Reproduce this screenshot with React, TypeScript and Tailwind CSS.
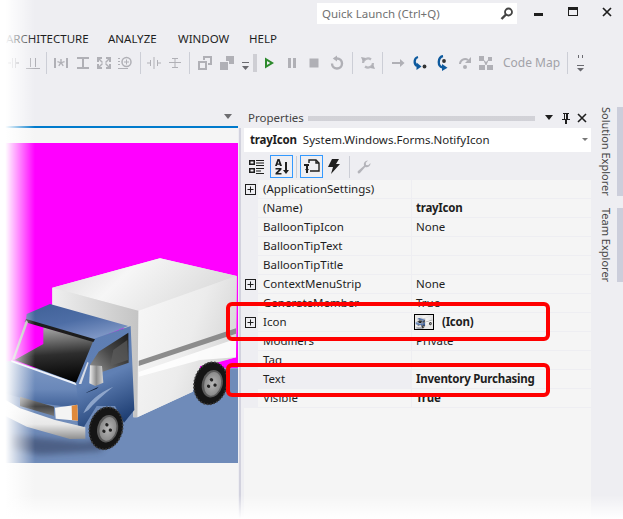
// Visual Studio properties panel for a tray icon, with the red call-outs on Icon and Text.
import type { ReactNode } from "react";

const FONT = "font-['Noto_Sans',sans-serif]";

type Row = { name: string; value?: string; bold?: boolean; plus?: boolean; icon?: boolean; selected?: boolean };

const ROWS: Row[] = [
  { name: "(ApplicationSettings)", plus: true },
  { name: "(Name)", value: "trayIcon", bold: true },
  { name: "BalloonTipIcon", value: "None" },
  { name: "BalloonTipText" },
  { name: "BalloonTipTitle" },
  { name: "ContextMenuStrip", value: "None", plus: true },
  { name: "GenerateMember", value: "True" },
  { name: "Icon", value: "(Icon)", bold: true, plus: true, icon: true },
  { name: "Modifiers", value: "Private" },
  { name: "Tag" },
  { name: "Text", value: "Inventory Purchasing", bold: true, selected: true },
  { name: "Visible", value: "True", bold: true },
];

function Ico({ children, c = "#b0b0b6" }: { children: ReactNode; c?: string }) {
  return (
    <svg width="16" height="16" viewBox="0 0 16 16" fill={c} stroke="none">
      {children}
    </svg>
  );
}

function Sep() {
  return <div className="h-[22px] w-px bg-[#ccced6]" />;
}

// slot keeps each toolbar glyph on its own column
function Slot({ w, children }: { w: string; children?: ReactNode }) {
  return <div className={`flex shrink-0 items-center justify-center ${w}`}>{children}</div>;
}

function MainToolbar() {
  return (
    <div className="mt-px flex h-[22px] items-center pl-[3px]">
      <Slot w="w-[20px]">
        <Ico><path d="M7 3h1v10H7zM10 3h1v10h-1zM3 7h3v2H3zM11 7h3v2h-3z" /></Ico>
      </Slot>
      <Slot w="w-[20px]">
        <Ico><path d="M5 3h1v9H5zM10 3h1v9h-1zM1 13h14v1H1z" /></Ico>
      </Slot>
      <Slot w="w-[7px]"><Sep /></Slot>
      <Slot w="w-[22px]">
        <Ico><path d="M1 3h2v10H1zM13 3h2v10h-2zM7.300 4h1.400v3l2.600-1 .5 1.300-2.700.8 1.700 2.300-1.100.8L8 8.800l-1.700 2.400-1.100-.8 1.700-2.300-2.700-.8.5-1.300 2.600 1z" /></Ico>
      </Slot>
      <Slot w="w-[21px]">
        <Ico><path d="M2 2h12v2H9v8h5v2H2v-2h5V4H2z" /></Ico>
      </Slot>
      <Slot w="w-[21px]">
        <Ico><path d="M1 2h5v2H4l3 3-1 1-3-3v2H1zM15 2v5h-2V5l-3 3-1-1 3-3h-2V2zM1 14V9h2v2l3-3 1 1-3 3h2v2zM15 14h-5v-2h2L9 9l1-1 3 3V9h2z" /></Ico>
      </Slot>
      <Slot w="w-[22px]">
        <Ico>
          <path d="M1 13h10v1H1zM1 3h2v1H1zM1 6h2v1H1zM1 9h2v1H1z" />
          <circle cx="9.500" cy="7" r="4.500" fill="none" stroke="#b0b0b6" strokeWidth="1.500" />
          <path d="M9 4.500h1V6.500h2v1h-2v2H9v-2H7v-1h2z" />
        </Ico>
      </Slot>
      <Slot w="w-[8px]"><Sep /></Slot>
      <Slot w="w-[20px]">
        <Ico><path d="M7.500 2h1v12h-1zM4 5h1v6H4zM11 5h1v6h-1zM1 7.500h3v1H1zM12 7.500h3v1h-3z" /></Ico>
      </Slot>
      <Slot w="w-[21px]">
        <Ico><path d="M2 7h12v1H2zM5 3h6v1H5zM5 12h6v1H5zM7.500 4h1v3h-1zM7.500 8h1v4h-1z" /></Ico>
      </Slot>
      <Slot w="w-[9px]"><Sep /></Slot>
      <Slot w="w-[22px]">
        <Ico><path d="M6 1h9v9h-4V8h2V3H8v2H6zM1 6h9v9H1zm2 2v5h5V8z" /></Ico>
      </Slot>
      <Slot w="w-[22px]">
        <Ico><path d="M7 1h8v8H10V6H7zM1 7h8v8H1z" /></Ico>
      </Slot>
      <Slot w="w-[14px]">
        <svg width="7" height="10" viewBox="0 0 7 10" className="mt-[8px]">
          <path d="M0 0h7v1H0z" fill="#6a6a70" />
          <path d="M0 4h7L3.500 8z" fill="#6a6a70" />
        </svg>
      </Slot>
      <Slot w="w-[6px]">
        <div className="h-[18px] w-[4px] bg-[radial-gradient(#a8a8b0_0.6px,transparent_0.8px)] bg-[length:2px_2px]" />
      </Slot>
      <Slot w="w-[22px]">
        <Ico c="#2d8a2d"><path d="M4 2.500 13 8l-9 5.500zM6 6v4l3.300-2z" fillRule="evenodd" /></Ico>
      </Slot>
      <Slot w="w-[23px]">
        <Ico><path d="M4 3h3v10H4zM9 3h3v10H9z" /></Ico>
      </Slot>
      <Slot w="w-[22px]">
        <Ico><path d="M3.500 3.500h9v9h-9z" /></Ico>
      </Slot>
      <Slot w="w-[23px]">
        <Ico>
          <path d="M8 3.500a5 5 0 1 1-5 5" fill="none" stroke="#b0b0b6" strokeWidth="2.400" />
          <path d="M8 0.500v6L3.800 3.500z" />
        </Ico>
      </Slot>
      <Slot w="w-[8px]"><Sep /></Slot>
      <Slot w="w-[23px]">
        <Ico>
          <path d="M3 8a5 5 0 0 1 8-3.500M13 8a5 5 0 0 1-8 3.500" fill="none" stroke="#b8b8be" strokeWidth="2.200" />
          <path d="M1 2l5 1-3 4zM15 14l-5-1 3-4z" />
        </Ico>
      </Slot>
      <Slot w="w-[7px]"><Sep /></Slot>
      <Slot w="w-[23px]">
        <Ico><path d="M2 7h8V4l4.500 4-4.500 4V9H2z" /></Ico>
      </Slot>
      <Slot w="w-[22px]">
        <Ico c="#0e5a9e">
          <path d="M6 2C2 3 1.500 9 5 11" fill="none" stroke="#0e5a9e" strokeWidth="2.300" />
          <path d="M4.500 7.500 9.500 11.500 4.500 15z" />
          <circle cx="12.500" cy="11.500" r="1.900" fill="#333" />
        </Ico>
      </Slot>
      <Slot w="w-[23px]">
        <Ico c="#0e5a9e">
          <path d="M8 1C3 2 2 11 7.500 12.500" fill="none" stroke="#0e5a9e" strokeWidth="2.300" />
          <path d="M7 9 12.500 12.800 7 16z" />
          <circle cx="9" cy="6" r="1.900" fill="#333" />
        </Ico>
      </Slot>
      <Slot w="w-[21px]">
        <Ico>
          <path d="M3 9a5 5 0 0 1 8-4" fill="none" stroke="#b0b0b6" strokeWidth="2" />
          <path d="M14 2v6H8z" />
          <circle cx="8" cy="12" r="2" />
        </Ico>
      </Slot>
      <Slot w="w-[21px]">
        <Ico><path d="M1 1h5v5H1zM10 2h4v4h-4zM1 10h6v5H1zM9 10h6v5H9zM6 5l2 2 2-2v1.500L8.500 10h-1L6 6.500z" /></Ico>
      </Slot>
      <span className="ml-[7px] w-[64px] text-[12px] leading-none text-[#a2a2a8]">Code Map</span>
      <Sep />
      <Slot w="w-[24px]">
        <svg width="7" height="18" viewBox="0 0 7 18">
          <path d="M1 1h1v3H1zM5 1h1v3H5zM0 11h7v1H0zM0 14h7l-3.500 3.500z" fill="#6a6a70" />
        </svg>
      </Slot>
    </div>
  );
}

function TruckShapes({ window = "#ff00ff" }: { window?: string }) {
  return (
    <g>
      {/* shadow on the floor */}
      <path d="M30 585 250 605 340 590 300 634 120 645 30 625z" fill="#2b3552" opacity=".5" filter="url(#soft)" />

      {/* cargo box */}
      <path d="M157 143 480 55 710 108 708 352 600 378 578 455 412 532 400 532 390 270 157 205z" fill="#e6e6e6" />
      <path d="M157 143 480 55 710 108 415 212z" fill="url(#boxTop)" />
      <path d="M415 212 710 108 708 352 650 368 600 378 578 455 412 532z" fill="url(#boxSide)" />
      <path d="M157 143 415 212 412 532 400 532 390 270 157 205z" fill="url(#boxFront)" />
      <path d="M416 362 708 265 708 281 416 378z" fill="#8c8c8c" />
      <path d="M416 396 708 296 708 352 600 360 416 410z" fill="#ffffff" opacity=".85" />

      {/* cab */}
      <path d="M80 222 150 192 385 258 282 300 78 240z" fill="url(#roof)" />
      <path d="M278 298 392 258 403 510 372 548 345 498 290 498 252 560 236 590 226 432z" fill="url(#door)" />
      <path d="M296 335 385 278 386 368 282 404 268 378z" fill="url(#glassSide)" />
      <path d="M340 330 382 300 384 360 330 378z" fill="#5c5c5c" opacity=".7" />
      <path d="M250 520Q270 470 340 440Q290 480 265 510z" fill="#9fb4d6" opacity=".8" />
      <path d="M258 458 296 440 290 446 260 458z" fill="#0c1b33" />

      {/* windscreen, open at the top left where the backdrop shows through */}
      <path d="M78 240 134 258 134 316 40 362z" fill={window} />
      <path d="M130 262 280 302 228 428 44 360 130 312z" fill="url(#glass)" />
      <path d="M78 237 285 298 280 306 74 246z" fill="#1d1d1d" />
      <path d="M78 240 36 360 44 358 84 246z" fill="#b8b8b8" />

      {/* hood and front */}
      <path d="M40 362 228 430 236 505 120 490 0 456 0 366z" fill="url(#hood)" />
      <path d="M34 360 226 428 230 436 34 366z" fill="#eef2fa" />
      <path d="M60 470 162 500 162 528 60 498z" fill="url(#grille)" />
      <path d="M165 503 232 494 234 542 167 536z" fill="#f4f4f4" />
      <path d="M215 497 232 494 234 542 216 540z" fill="#e08a3c" />
      <path d="M0 470 60 505 165 540 256 562 256 596 210 597 80 560 0 520z" fill="url(#bumper)" />

      {/* mirror */}
      <path d="M236 432 262 366 266 368 244 432z" fill="#d9dde6" />
      <path d="M270 376 306 378 310 428 286 438 268 430z" fill="url(#mirror)" />

      <Wheel cx={318} cy={565} />
      <Wheel cx={632} cy={430} />
    </g>
  );
}

function Wheel({ cx, cy }: { cx: number; cy: number }) {
  return (
    <g transform={`translate(${cx} ${cy}) rotate(14)`}>
      <ellipse rx="50" ry="65" fill="#151515" />
      <ellipse rx="49" ry="64" fill="none" stroke="#3c3c3c" strokeWidth="5" strokeDasharray="5 5" />
      <ellipse cx="5" rx="31" ry="42" fill="#5a5a5a" />
      <ellipse cx="6" rx="25" ry="36" fill="url(#hub)" />
      <circle cx="0" cy="-11" r="5" fill="#222" />
      <circle cx="-4" cy="10" r="5" fill="#222" />
      <circle cx="14" cy="2" r="5" fill="#222" />
    </g>
  );
}

// gradients shared by the big picture and the thumbnail
function TruckDefs() {
  return (
    <defs>
      <linearGradient id="boxTop" x1="0" y1="0" x2="1" y2="0.3">
        <stop offset="0" stopColor="#dadada" />
        <stop offset=".45" stopColor="#f6f6f6" />
        <stop offset="1" stopColor="#dcdcdc" />
      </linearGradient>
      <linearGradient id="boxSide" x1="0" y1="0" x2="1" y2="0.5">
        <stop offset="0" stopColor="#f8f8f8" />
        <stop offset=".6" stopColor="#ececec" />
        <stop offset="1" stopColor="#d6d6d6" />
      </linearGradient>
      <linearGradient id="boxFront" x1="0" y1="0" x2="1" y2="0">
        <stop offset="0" stopColor="#efefef" />
        <stop offset="1" stopColor="#c4c4c4" />
      </linearGradient>
      <linearGradient id="roof" x1="0" y1="0" x2="0.6" y2="1">
        <stop offset="0" stopColor="#3f6097" />
        <stop offset=".55" stopColor="#4e6ea6" />
        <stop offset="1" stopColor="#8098c6" />
      </linearGradient>
      <linearGradient id="door" x1="0" y1="0" x2="0.25" y2="1">
        <stop offset="0" stopColor="#5d7db3" />
        <stop offset=".55" stopColor="#6080b4" />
        <stop offset="1" stopColor="#1d3d72" />
      </linearGradient>
      <linearGradient id="glassSide" x1="0" y1="1" x2="1" y2="0">
        <stop offset="0" stopColor="#9a9a9a" />
        <stop offset=".5" stopColor="#4a4a4a" />
        <stop offset="1" stopColor="#1a1a1a" />
      </linearGradient>
      <linearGradient id="glass" x1="0.4" y1="0" x2="0.5" y2="1">
        <stop offset="0" stopColor="#a8a8a8" />
        <stop offset=".25" stopColor="#6c6c6c" />
        <stop offset=".5" stopColor="#2e2e2e" />
        <stop offset="1" stopColor="#000000" />
      </linearGradient>
      <linearGradient id="hood" x1="0" y1="0" x2="0" y2="1">
        <stop offset="0" stopColor="#7f9ac6" />
        <stop offset=".6" stopColor="#6a88b9" />
        <stop offset="1" stopColor="#3e5f96" />
      </linearGradient>
      <linearGradient id="grille" x1="0" y1="0" x2="0" y2="1">
        <stop offset="0" stopColor="#888888" />
        <stop offset=".5" stopColor="#444444" />
        <stop offset="1" stopColor="#777777" />
      </linearGradient>
      <linearGradient id="bumper" x1="0" y1="0" x2="0" y2="1">
        <stop offset="0" stopColor="#ffffff" />
        <stop offset=".65" stopColor="#e8e8e8" />
        <stop offset="1" stopColor="#8f8f8f" />
      </linearGradient>
      <linearGradient id="mirror" x1="0" y1="0" x2="1" y2="0">
        <stop offset="0" stopColor="#f2f2f2" />
        <stop offset=".5" stopColor="#8d8d8d" />
        <stop offset="1" stopColor="#d4d4d4" />
      </linearGradient>
      <radialGradient id="hub">
        <stop offset="0" stopColor="#b8b8b8" />
        <stop offset="1" stopColor="#8a8a8a" />
      </radialGradient>
      <filter id="soft" x="-20%" y="-40%" width="140%" height="180%">
        <feGaussianBlur stdDeviation="10" />
      </filter>
    </defs>
  );
}

function DesignerImage() {
  return (
    <svg width="238" height="320" viewBox="0 -291 714 960" className="block shrink-0">
      <TruckDefs />
      <rect x="0" y="-291" width="714" height="676" fill="#ff00ff" />
      <rect x="0" y="385" width="714" height="284" fill="#6f8bb9" />
      <TruckShapes />
    </svg>
  );
}

function PlusBox() {
  return (
    <svg width="11" height="11" viewBox="0 0 11 11">
      <rect x=".5" y=".5" width="10" height="10" fill="none" stroke="#1e1e1e" />
      <path d="M5 2.500h1v2.500h2.500v1H6v2.500H5V6H2.500V5H5z" fill="#1e1e1e" />
    </svg>
  );
}

function IconThumb() {
  return (
    <span className="mr-[8px] ml-[-2px] flex h-[16px] w-[20px] shrink-0 border border-black bg-[#e8e8e8]">
      <svg width="18" height="14" viewBox="0 60 714 600">
        <TruckShapes window="#e8e8e8" />
      </svg>
    </span>
  );
}

function PropRow({ row }: { row: Row }) {
  return (
    <div className="flex h-[19px] text-[11.5px] leading-[18px] text-[#1e1e1e]">
      <div className="flex w-[14px] shrink-0 items-center pb-px pl-[1px]">{row.plus && <PlusBox />}</div>
      <div
        className={`w-[153px] shrink-0 border-b border-[#eeeef2] pl-[5px] whitespace-nowrap ${
          row.selected ? "bg-[#eeeef2]" : "bg-[#f5f5f5]"
        }`}
      >
        {row.name}
      </div>
      <div className="w-px bg-[#eeeef2]" />
      <div
        className={`flex flex-1 items-center border-b border-[#eeeef2] bg-[#f5f5f5] pl-[4px] whitespace-nowrap ${
          row.bold ? "font-bold tracking-[-0.25px]" : ""
        }`}
      >
        {row.icon && <IconThumb />}
        {row.value}
      </div>
    </div>
  );
}

function PropertiesPanel() {
  return (
    <div className="flex w-[347px] shrink-0 flex-col">
      <div className="flex h-[20px] items-center pl-[4px] text-[11.5px] text-[#444444]">
        <span className="w-[60px]">Properties</span>
        <div className="h-[5px] w-[227px] bg-[radial-gradient(#b0b0b8_0.6px,transparent_0.8px)] bg-[length:2px_2px]" />
        <svg width="10" height="6" viewBox="0 0 10 6" className="ml-[9px]">
          <path d="M1 0h8L5 5z" fill="#1e1e1e" />
        </svg>
        <svg width="10" height="13" viewBox="0 0 10 13" className="ml-[7px]">
          <path d="M2 1h6v1H7v5h2v1H6v4H4V8H1V7h2V2H2zM4 2v5h1V2z" fill="#1e1e1e" fillRule="evenodd" />
        </svg>
        <svg width="10" height="10" viewBox="0 0 10 10" className="ml-[6px]">
          <path d="M1 1l8 8M9 1 1 9" stroke="#1e1e1e" strokeWidth="1.600" />
        </svg>
      </div>

      <div className="flex h-[24px] items-center bg-white pl-[6px] text-[11.5px] text-[#1e1e1e]">
        <span className="font-bold tracking-[-0.2px]">trayIcon</span>
        <span className="ml-[6px] flex-1">System.Windows.Forms.NotifyIcon</span>
        <svg width="6" height="4" viewBox="0 0 6 4" className="mr-[3px]">
          <path d="M0 0h6L3 3z" fill="#777777" />
        </svg>
      </div>

      <div className="flex h-[28px] items-center pt-px">
        <div className="flex w-[26px] justify-center">
          <svg width="16" height="16" viewBox="0 0 16 16" fill="#1e1e1e">
            <path d="M0 1h6v5H0zm1.500 1.500v2h3v-2zM0 9h6v5H0zm1.500 1.500v2h3v-2z" fillRule="evenodd" />
            <path d="M7 1h8v1H7zM7 3.500h8v1H7zM7 6h8v1H7zM7 9h8v1H7zM7 11.500h5v1H7zM7 14h8v1H7z" />
          </svg>
        </div>
        <div className="flex h-[23px] w-[23px] items-center justify-center border border-[#3399ff]">
          <svg width="16" height="16" viewBox="0 0 16 16" fill="#1e1e1e">
            <path d="M3.500 0h2l2.500 7H6l-.4-1.300H3.300L2.900 7H1zM4.400 2 3.700 4.400h1.500z" fillRule="evenodd" />
            <path d="M1.500 9h6v1.500L4 14h3.500v1.500h-6V14L5 10.500H1.500z" />
            <path d="M11 3h2v8h2l-3 4-3-4h2z" />
          </svg>
        </div>
        <div className="mx-[3px] h-[22px] w-px bg-[#ccced6]" />
        <div className="flex h-[23px] w-[23px] items-center justify-center border border-[#3399ff]">
          <svg width="18" height="17" viewBox="0 0 18 17" fill="none" stroke="#1e1e1e" strokeWidth="1.400">
            <path d="M6 5V2h7l3 3v8H7" />
            <path d="M13 2v3h3" />
            <path d="M1 7h5M4 7v8" strokeWidth="2" />
            <path d="M2 11h4l-2 3z" fill="#1e1e1e" stroke="none" />
          </svg>
        </div>
        <div className="flex w-[22px] justify-center">
          <svg width="12" height="17" viewBox="0 0 12 17">
            <path d="M4 1h7L8 6h4L3 16l2-7H0z" fill="#1e1e1e" />
          </svg>
        </div>
        <div className="mx-[4px] h-[22px] w-px bg-[#ccced6]" />
        <div className="flex w-[20px] justify-center">
          <svg width="14" height="14" viewBox="0 0 14 14">
            <path d="M13.500 3a4 4 0 0 1-5.300 4L3 13a1.400 1.400 0 0 1-2-2l6-5.200A4 4 0 0 1 11 .5L8.800 2.800 9 5l2.200.3z" fill="#b4b4ba" />
          </svg>
        </div>
      </div>

      <div className="flex flex-col">
        {ROWS.map((r) => (
          <PropRow key={r.name} row={r} />
        ))}
      </div>
      <div className="flex-1 bg-[#f5f5f5]" />
    </div>
  );
}

export default function App() {
  return (
    <div className={`relative flex h-[519px] w-[623px] flex-col overflow-hidden bg-[#eeeef2] ${FONT}`}>
      <div className="flex h-[27px] items-start pt-[3px] pl-[317px]">
        <div className="flex h-[21px] w-[200px] items-center justify-between bg-white pr-[3px] pl-[5px] text-[11.5px] text-[#717171]">
          <span>Quick Launch (Ctrl+Q)</span>
          <svg width="14" height="14" viewBox="0 0 14 14">
            <circle cx="8.500" cy="5" r="3.500" fill="none" stroke="#444444" strokeWidth="1.800" />
            <path d="M6 7.500 1.500 12" stroke="#444444" strokeWidth="2.400" />
          </svg>
        </div>
        <div className="mt-[10px] ml-[17px] h-[3px] w-[9px] bg-[#1e1e1e]" />
        <div className="mt-[4px] ml-[25px] h-[9px] w-[10px] border border-t-[3px] border-[#1e1e1e]" />
        <svg width="10" height="10" viewBox="0 0 10 10" className="mt-[4px] ml-[24px]">
          <path d="M1 1l8 8M9 1 1 9" stroke="#1e1e1e" strokeWidth="1.700" />
        </svg>
      </div>

      <div className="flex h-[24px] items-center pl-[6px] text-[11.5px] text-[#1e1e1e]">
        <span className="w-[102px]">ARCHITECTURE</span>
        <span className="w-[70px]">ANALYZE</span>
        <span className="w-[71px]">WINDOW</span>
        <span>HELP</span>
      </div>

      <MainToolbar />

      <div className="flex min-h-0 flex-1 pt-[34px]">
        <div className="flex w-[238px] shrink-0 flex-col">
          <div className="flex h-[18px] items-center justify-end pr-[6px] pb-[2px]">
            <svg width="8" height="5" viewBox="0 0 8 5">
              <path d="M0 0h8L4 5z" fill="#6d6d70" />
            </svg>
          </div>
          <div className="h-[2px] bg-[#007acc]" />
          <div className="h-[15px] bg-[#f5f5f5]" />
          <DesignerImage />
          <div className="flex-1 bg-[#f5f5f5]" />
        </div>
        <div className="w-[1px] shrink-0" />
        <div className="mt-[20px] w-[2px] shrink-0 bg-[#d2d2de]" />
        <div className="w-[3px] shrink-0" />
        <PropertiesPanel />
        <div className="-mt-px flex flex-1 text-[11px] text-[#444444]">
          <div className="flex w-[26px] flex-col items-center pl-[3px]">
            <span className="h-[101px] whitespace-nowrap [writing-mode:vertical-rl]">Solution Explorer</span>
            <span className="whitespace-nowrap [writing-mode:vertical-rl]">Team Explorer</span>
          </div>
          <div className="flex w-[6px] flex-col">
            <div className="h-[89px] bg-[#cccedb]" />
            <div className="mt-[12px] h-[74px] bg-[#cccedb]" />
          </div>
        </div>
      </div>

      {/* fades at the screenshot edges */}
      <div className="pointer-events-none absolute inset-y-0 left-0 w-[35px] bg-gradient-to-r from-white from-[15%] to-transparent" />
      <div className="pointer-events-none absolute inset-x-0 bottom-0 h-[24px] bg-gradient-to-t from-white to-transparent" />

      {/* red call-outs */}
      <div className="pointer-events-none absolute top-[302px] left-[226px] h-[39px] w-[324px] rounded-[6px] border-4 border-[#ff0000]" />
      <div className="pointer-events-none absolute top-[363px] left-[226px] h-[34px] w-[324px] rounded-[6px] border-4 border-[#ff0000]" />
    </div>
  );
}
